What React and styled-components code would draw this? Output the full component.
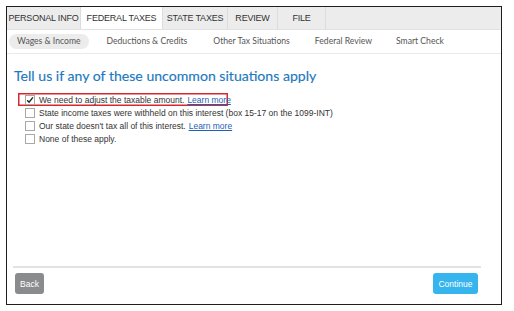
import React, { useState } from 'react';
import styled, { createGlobalStyle } from 'styled-components';

const GlobalStyle = createGlobalStyle`
  body {
    margin: 0;
    background: #fff;
    font-family: "Liberation Sans", Arial, sans-serif;
  }
`;

const Frame = styled.div`
  margin: 6px 0 0 6px;
  width: 494px;
  height: 297px;
  border: 1px solid #1e1e1e;
  display: flex;
  flex-direction: column;
  background: #fff;
`;

const TabBar = styled.div`
  display: flex;
  height: 22px;
  background: #ececec;
  border-bottom: 1px solid #e2e2e2;
`;

const Tab = styled.div`
  display: flex;
  align-items: center;
  justify-content: center;
  width: ${(p) => p.w}px;
  font-size: 9px;
  white-space: nowrap;
  color: #333;
  letter-spacing: -0.2px;
  background: ${(p) => (p.active ? '#fff' : 'transparent')};
  border-right: 1px solid #dcdcdc;
  box-sizing: border-box;
`;

const SubNav = styled.div`
  display: flex;
  align-items: center;
  height: 23px;
  padding-left: 2px;
  border-bottom: 1px solid #eaeaea;
`;

const SubItem = styled.div`
  font-family: Lato, "Noto Sans", sans-serif;
  font-size: 8.6px;
  white-space: nowrap;
  color: #555;
  height: 15px;
  line-height: 15px;
  padding: 0 ${(p) => p.pad || 0}px;
  margin-right: ${(p) => p.gap}px;
  border-radius: 8px;
  background: ${(p) => (p.active ? '#ececec' : 'transparent')};
`;

const Main = styled.div`
  flex: 1;
  display: flex;
  flex-direction: column;
  padding: 0 20px 0 6px;
`;

const Heading = styled.h1`
  margin: 12px 0 0 1px;
  font-family: Lato, "Noto Sans", sans-serif;
  font-weight: 400;
  font-size: 14.1px;
  color: #1b78be;
  line-height: 20px;
  white-space: nowrap;
  -webkit-text-stroke: 0.15px #1b78be;
`;

const Options = styled.div`
  display: flex;
  flex-direction: column;
  margin-top: 7px;
  margin-left: 5px;
`;

const Option = styled.div`
  display: flex;
  align-items: center;
  height: 13px;
  width: ${(p) => (p.highlight ? '203px' : 'auto')};
  padding-left: 7px;
  font-size: 8.5px;
  white-space: nowrap;
  color: #333;
  box-shadow: ${(p) => (p.highlight ? 'inset 0 0 0 1.5px #d6282e' : 'none')};
`;

const Box = styled.span`
  width: 8px;
  height: 8px;
  border: 1px solid #a8a8a8;
  background: #fff;
  margin-right: 4px;
  display: flex;
  align-items: center;
  justify-content: center;
  flex-shrink: 0;
`;

const LearnMore = styled.span`
  color: #1f5fb4;
  text-decoration: underline;
  margin-left: 3px;
  cursor: pointer;
`;

const Spacer = styled.div`
  flex: 1;
`;

const Footer = styled.div`
  border-top: 2px solid #e2e2e2;
  padding: 5px 3px 10px 2px;
  display: flex;
  justify-content: space-between;
`;

const Button = styled.button`
  height: 21px;
  padding: 0 ${(p) => p.pad}px;
  border: none;
  border-radius: 3px;
  font-family: "Liberation Sans", Arial, sans-serif;
  font-size: 8.5px;
  color: #fff;
  background: ${(p) => p.bg};
`;

const tabs = [
  { label: 'PERSONAL INFO', w: 74 },
  { label: 'FEDERAL TAXES', w: 82, active: true },
  { label: 'STATE TAXES', w: 65 },
  { label: 'REVIEW', w: 50 },
  { label: 'FILE', w: 48 },
];

const subs = [
  { label: 'Wages & Income', active: true, pad: 8, gap: 18 },
  { label: 'Deductions & Credits', gap: 26 },
  { label: 'Other Tax Situations', gap: 25 },
  { label: 'Federal Review', gap: 24 },
  { label: 'Smart Check', gap: 0 },
];

const Check = () => (
  <svg width="8" height="8" viewBox="0 0 8 8">
    <path d="M1.2 4.2 L3.1 6.2 L6.9 1.4" stroke="#222" strokeWidth="1.4" fill="none" />
  </svg>
);

const App = () => {
  const [checked] = useState([true, false, false, false]);
  const options = [
    { text: 'We need to adjust the taxable amount.', link: true, highlight: true },
    { text: 'State income taxes were withheld on this interest (box 15-17 on the 1099-INT)' },
    { text: "Our state doesn't tax all of this interest.", link: true },
    { text: 'None of these apply.' },
  ];

  return (
    <>
      <GlobalStyle />
      <Frame>
        <TabBar>
          {tabs.map((t) => (
            <Tab key={t.label} w={t.w} active={t.active}>
              {t.label}
            </Tab>
          ))}
        </TabBar>
        <SubNav>
          {subs.map((s) => (
            <SubItem key={s.label} active={s.active} pad={s.pad} gap={s.gap}>
              {s.label}
            </SubItem>
          ))}
        </SubNav>
        <Main>
          <Heading>Tell us if any of these uncommon situations apply</Heading>
          <Options>
            {options.map((o, i) => (
              <Option key={o.text} highlight={o.highlight}>
                <Box>{checked[i] && <Check />}</Box>
                {o.text}
                {o.link && <LearnMore>Learn more</LearnMore>}
              </Option>
            ))}
          </Options>
          <Spacer />
          <Footer>
            <Button bg="#8a8b8d" pad={5}>Back</Button>
            <Button bg="#36b4ee" pad={5.5}>Continue</Button>
          </Footer>
        </Main>
      </Frame>
    </>
  );
};

export default App;
